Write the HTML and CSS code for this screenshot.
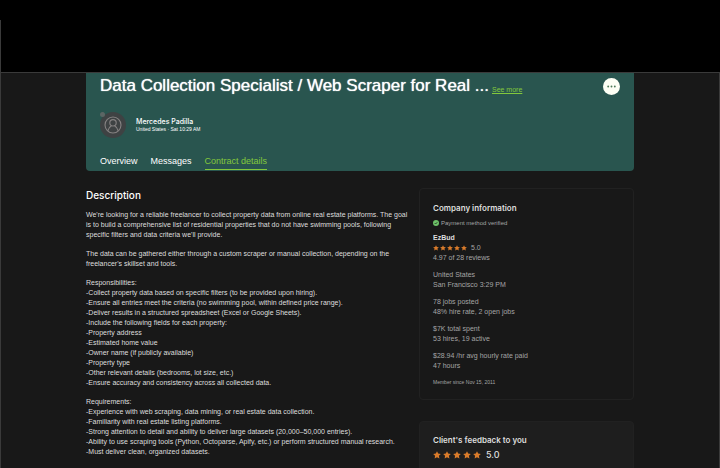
FILE: index.html
```
<!DOCTYPE html>
<html lang="en">
<head>
  <meta charset="UTF-8">
  <meta name="viewport" content="width=device-width, initial-scale=1.0">
  <title>Contract details</title>
  <link rel="stylesheet" href="styles.css">
</head>
<body>
  <svg class="sprite" aria-hidden="true">
    <symbol id="star" viewBox="0 0 24 24">
      <path d="M12 .5l3.5 7.2 8 1-5.8 5.5 1.5 8L12 18.4l-7.2 3.8 1.5-8L.5 8.7l8-1z"/>
    </symbol>
  </svg>

  <div class="top-bar"></div>

  <div class="page">
    <header class="hero">
      <div class="hero-top">
        <h1>Data Collection Specialist / Web Scraper for Real ...</h1>
        <a class="see-more" href="#">See more</a>
        <button class="more-btn" type="button" aria-label="More options">
          <svg viewBox="0 0 18 18"><circle cx="5.5" cy="9" r="1"/><circle cx="9" cy="9" r="1"/><circle cx="12.5" cy="9" r="1"/></svg>
        </button>
      </div>

      <div class="person">
        <div class="avatar">
          <svg viewBox="0 0 26 26">
            <circle cx="13" cy="13" r="13" fill="#3e4243"/>
            <g fill="none" stroke="#858282" stroke-width="1.1">
              <circle cx="13" cy="13" r="8"/>
              <circle cx="13" cy="10.8" r="3.2"/>
              <path d="M7.8 18.8c.6-2.7 2-4.2 3.6-5.1M18.2 18.8c-.6-2.7-2-4.2-3.6-5.1"/>
            </g>
          </svg>
          <span class="presence"></span>
        </div>
        <div>
          <p class="person-name">Mercedes Padilla</p>
          <p class="person-meta">United States · Sat 10:29 AM</p>
        </div>
      </div>

      <nav class="tabs">
        <a href="#">Overview</a>
        <a href="#">Messages</a>
        <a class="active" href="#">Contract details</a>
      </nav>
    </header>

    <div class="columns">
      <main class="description">
        <h2>Description</h2>
        <p>We're looking for a reliable freelancer to collect property data from online real estate platforms. The goal<br>
          is to build a comprehensive list of residential properties that do not have swimming pools, following<br>
          specific filters and data criteria we'll provide.</p>
        <p>The data can be gathered either through a custom scraper or manual collection, depending on the<br>
          freelancer's skillset and tools.</p>
        <p>Responsibilities:<br>
          -Collect property data based on specific filters (to be provided upon hiring).<br>
          -Ensure all entries meet the criteria (no swimming pool, within defined price range).<br>
          -Deliver results in a structured spreadsheet (Excel or Google Sheets).<br>
          -Include the following fields for each property:<br>
          -Property address<br>
          -Estimated home value<br>
          -Owner name (if publicly available)<br>
          -Property type<br>
          -Other relevant details (bedrooms, lot size, etc.)<br>
          -Ensure accuracy and consistency across all collected data.</p>
        <p>Requirements:<br>
          -Experience with web scraping, data mining, or real estate data collection.<br>
          -Familiarity with real estate listing platforms.<br>
          -Strong attention to detail and ability to deliver large datasets (20,000–50,000 entries).<br>
          -Ability to use scraping tools (Python, Octoparse, Apify, etc.) or perform structured manual research.<br>
          -Must deliver clean, organized datasets.</p>
        <p>Preferred Qualifications:</p>
      </main>

      <aside class="sidebar">
        <section class="card">
          <h3>Company information</h3>
          <p class="verified">
            <svg viewBox="0 0 12 12"><circle cx="6" cy="6" r="6" fill="#6cc067"/><path d="M3.4 6.2l1.8 1.8 3.4-3.6" fill="none" stroke="#181818" stroke-width="1.5"/></svg>
            Payment method verified
          </p>
          <h4>EzBud</h4>
          <div class="rating">
            <svg><use href="#star"/></svg><svg><use href="#star"/></svg><svg><use href="#star"/></svg><svg><use href="#star"/></svg><svg><use href="#star"/></svg>
            <span>5.0</span>
          </div>
          <p class="fact">4.97 of 28 reviews</p>
          <p class="fact">United States<br>San Francisco 3:29 PM</p>
          <p class="fact">78 jobs posted<br>48% hire rate, 2 open jobs</p>
          <p class="fact">$7K total spent<br>53 hires, 19 active</p>
          <p class="fact">$28.94 /hr avg hourly rate paid<br>47 hours</p>
          <p class="since">Member since Nov 15, 2011</p>
        </section>

        <section class="card feedback">
          <h3>Client's feedback to you</h3>
          <div class="rating large">
            <svg><use href="#star"/></svg><svg><use href="#star"/></svg><svg><use href="#star"/></svg><svg><use href="#star"/></svg><svg><use href="#star"/></svg>
            <span>5.0</span>
          </div>
        </section>
      </aside>
    </div>
  </div>
</body>
</html>
```
FILE: styles.css
```
:root {
  --page-bg: #181818;
  --hero-bg: #29554f;
  --green: #83c83c;
  --text: #dedede;
  --text-muted: #a5a5a5;
  --border: #212121;
  --star: #d97b2b;
}

* {
  margin: 0;
  padding: 0;
  box-sizing: border-box;
}

body {
  height: 100vh;
  display: flex;
  flex-direction: column;
  overflow: hidden;
  background: #000;
  color: var(--text);
  font-family: "Liberation Sans", Arial, sans-serif;
  font-size: 7px;
  line-height: 10px;
}

.sprite {
  display: none;
}

.top-bar {
  height: 52px;
  margin-top: 20px;
  flex-shrink: 0;
  border-left: 1px solid #3a3a3a;
}

.page {
  flex: 1;
  min-height: 0;
  overflow: hidden;
  padding: 0 85px;
  background: var(--page-bg);
  border: 1px solid #3a3a3a;
  border-bottom: none;
}

.hero {
  padding: 2px 14px 0;
  background: var(--hero-bg);
  border-radius: 0 0 4px 4px;
}

.hero-top {
  display: flex;
  align-items: center;
}

h1 {
  font-size: 17px;
  font-weight: 400;
  line-height: 22px;
  color: #fff;
  text-shadow: 0 0 1px #fff;
  white-space: nowrap;
}

.see-more {
  margin: 8px 0 0 3px;
  color: var(--green);
}

.more-btn {
  width: 17px;
  height: 17px;
  margin-left: auto;
  border: none;
  border-radius: 50%;
  background: #fdfff5;
}

.more-btn svg {
  display: block;
  width: 17px;
  height: 17px;
  fill: #4d7a58;
}

.person {
  display: flex;
  align-items: center;
  gap: 10px;
  margin-top: 15px;
}

.avatar {
  position: relative;
  width: 26px;
  height: 26px;
}

.avatar svg {
  display: block;
}

.presence {
  position: absolute;
  top: 0;
  left: 0;
  width: 5px;
  height: 5px;
  border-radius: 50%;
  background: #5b6664;
}

.person-name {
  font-family: Inter, sans-serif;
  font-weight: 500;
  color: #fff;
  line-height: 9px;
}

.person-meta {
  font-size: 5px;
  line-height: 7px;
  color: #fff;
}

.tabs {
  display: flex;
  gap: 13px;
  margin-top: 16px;
  font-size: 9px;
  line-height: 15px;
}

.tabs a {
  margin-bottom: 1px;
  border-bottom: 1px solid transparent;
  color: #fff;
  text-decoration: none;
}

.tabs .active {
  color: var(--green);
  border-color: var(--green);
}

.columns {
  display: flex;
  align-items: flex-start;
  gap: 14px;
  padding-top: 17px;
}

.description {
  flex: 1;
  min-width: 0;
}

.description h2 {
  margin-bottom: 8px;
  font-family: Inter, sans-serif;
  font-size: 10px;
  font-weight: 500;
  line-height: 14px;
  color: #fff;
}

.description p {
  margin-bottom: 9px;
  white-space: nowrap;
}

.sidebar {
  width: 215px;
  display: flex;
  flex-direction: column;
  gap: 21px;
}

.card {
  padding: 13px;
  border: 1px solid var(--border);
  border-radius: 4px;
}

.feedback {
  padding-top: 12px;
  background: #1e1e1e;
}

.card h3 {
  font-family: Inter, sans-serif;
  font-size: 8px;
  font-weight: 600;
  line-height: 12px;
}

.verified {
  display: flex;
  align-items: center;
  gap: 2px;
  margin-top: 4px;
  font-size: 6px;
  color: var(--text-muted);
}

.verified svg {
  width: 6px;
  height: 6px;
}

.card h4 {
  margin-top: 5px;
  font-size: 7px;
}

.rating {
  display: flex;
  align-items: center;
  gap: 1px;
  color: var(--text-muted);
}

.rating svg {
  width: 6px;
  height: 6px;
  fill: var(--star);
}

.rating span {
  margin-left: 3px;
}

.fact {
  margin-bottom: 7px;
  color: var(--text-muted);
}

.since {
  font-size: 5px;
  line-height: 8px;
  color: var(--text-muted);
}

.large {
  gap: 2px;
  margin-top: 4px;
  font-family: Inter, sans-serif;
  font-size: 9px;
  font-weight: 500;
  color: var(--text);
}

.large svg {
  width: 8px;
  height: 8px;
}
```
